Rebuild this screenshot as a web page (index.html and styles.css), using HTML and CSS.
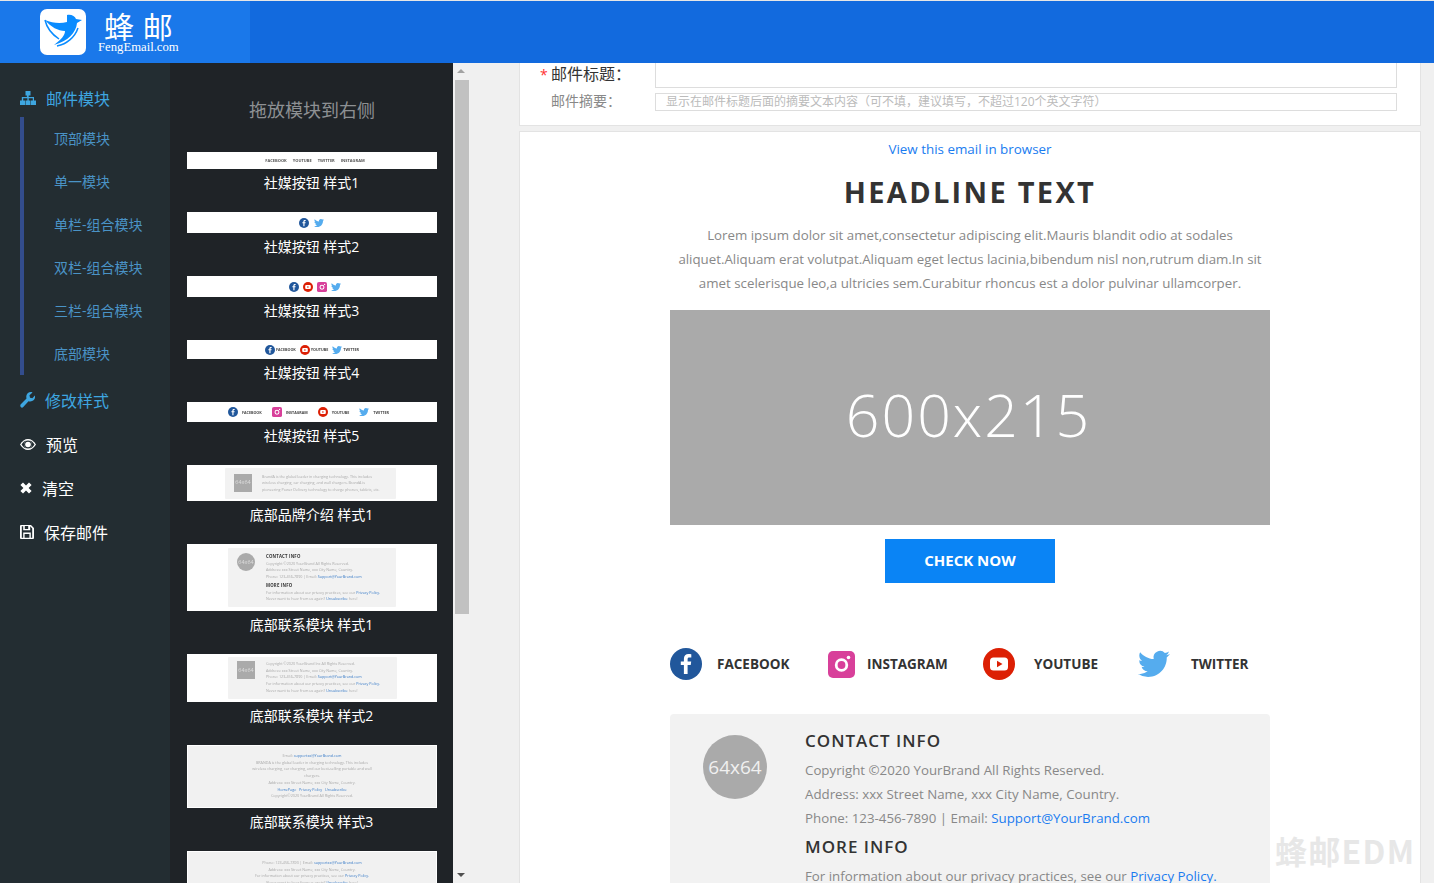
FILE: index.html
```html
<!DOCTYPE html>
<html lang="zh-CN">
<head>
<meta charset="utf-8">
<title>蜂邮EDM</title>
<link rel="stylesheet" href="styles.css">
</head>
<body>
<svg class="sprite" width="0" height="0" aria-hidden="true">
  <symbol id="i-fb" viewBox="0 0 32 32"><circle cx="16" cy="16" r="16" fill="#21579b"/><path d="M17.6 26v-9h3.1l.5-3.600h-3.600v-2.200c0-1 .4-1.700 1.800-1.700h1.900V6.300c-.4 0-1.500-.2-2.800-.2-2.800 0-4.600 1.700-4.600 4.700v2.600h-3.100V17h3.100v9z" fill="#fff"/></symbol>
  <symbol id="i-ig" viewBox="0 0 27 27"><rect width="27" height="27" rx="5" fill="#d8409a"/><circle cx="13.500" cy="14" r="5.300" fill="none" stroke="#fff" stroke-width="2.800"/><circle cx="20.500" cy="6.500" r="1.800" fill="#fff"/></symbol>
  <symbol id="i-yt" viewBox="0 0 32 32"><circle cx="16" cy="16" r="16" fill="#dc1f04"/><rect x="7" y="9.500" width="18" height="13" rx="3.500" fill="#fff"/><path d="M14 12.700v6.600l5.500-3.300z" fill="#dc1f04"/></symbol>
  <symbol id="i-tw" viewBox="0 0 24 24"><path d="M23.953 4.570a10 10 0 01-2.825.775 4.958 4.958 0 002.163-2.723c-.951.555-2.005.959-3.127 1.184a4.920 4.920 0 00-8.384 4.482C7.690 8.095 4.067 6.130 1.640 3.162a4.822 4.822 0 00-.666 2.475c0 1.710.870 3.213 2.188 4.096a4.904 4.904 0 01-2.228-.616v.060a4.923 4.923 0 003.946 4.827 4.996 4.996 0 01-2.212.085 4.936 4.936 0 004.604 3.417 9.867 9.867 0 01-6.102 2.105c-.390 0-.779-.023-1.170-.067a13.995 13.995 0 007.557 2.209c9.053 0 13.998-7.496 13.998-13.985 0-.210 0-.420-.015-.630A9.935 9.935 0 0024 4.590z" fill="#55acee"/></symbol>
</svg>

<header class="topbar">
  <div class="brand">
    <svg class="logo" viewBox="0 0 46 46" width="46" height="46">
      <rect width="46" height="46" rx="7" fill="#fff"/>
      <path d="M27 6C31 5 35 7 36 10L42 11 37 14C36 24 28 32 14 36 22 30 25 26 25 22 18 22 11 18 5 11 12 14 20 15 27 13Z" fill="#0a8cff"/>
      <path d="M38 19C35 28 27 35 17 37" fill="none" stroke="#0a8cff" stroke-width="1.500"/>
      <path d="M5 11C7 20 13 26 19 30" fill="none" stroke="#0a8cff" stroke-width="1.500"/>
    </svg>
    <div class="brand-text">
      <div class="brand-cn">蜂 邮</div>
      <div class="brand-en">FengEmail.com</div>
    </div>
  </div>
</header>

<div class="workspace">
  <nav class="sidenav">
    <div class="nav-item nav-active">
      <svg class="ni" width="16" height="14" viewBox="0 0 16 14"><path d="M5.500 0h5v4.500H8.700V6H14v3.500h2V14h-5V9.500h1.800V7.300H8.700v2.200h1.800V14h-5V9.500h1.900V7.300H3.200v2.200H5V14H0V9.500h1.800V6h5.100V4.500H5.500z" fill="#3ea6e0"/></svg>
      <span>邮件模块</span>
    </div>
    <ul class="subnav">
      <li>顶部模块</li>
      <li>单一模块</li>
      <li>单栏-组合模块</li>
      <li>双栏-组合模块</li>
      <li>三栏-组合模块</li>
      <li>底部模块</li>
    </ul>
    <div class="nav-item nav-blue nav-first">
      <svg class="ni" width="15" height="16" viewBox="0 0 15 16"><path d="M1 15.300c-1-1-1-2.300 0-3.300l5.500-5.500C5.900 4.300 6.500 2.300 8 1 9.300 0 11 -.2 12.500.4L9.500 3.300l.5 2.400 2.400.6 2.400-2.800c.6 1.600.2 3.300-1 4.600-1.300 1.300-3.300 1.800-5.300 1.200L3.500 14.800c-.8.900-1.700 1.200-2.500.5z" fill="#3ea6e0"/></svg>
      <span>修改样式</span>
    </div>
    <div class="nav-item">
      <svg class="ni" width="16" height="11" viewBox="0 0 16 11"><path d="M0 5.500C2 2 5 0 8 0s6 2 8 5.500C14 9 11 11 8 11S2 9 0 5.500z" fill="#fff"/><circle cx="8" cy="5.500" r="3.900" fill="#222d32"/><circle cx="8" cy="5.500" r="2.800" fill="#fff"/><path d="M1.500 5.500C3 3.300 4.500 2 6 1.500 4.700 2.500 4.200 3.800 4.200 5.500S4.700 8.500 6 9.500C4.500 9 3 7.700 1.500 5.500z" fill="#222d32"/><path d="M14.500 5.500C13 3.300 11.500 2 10 1.500c1.300 1 1.800 2.300 1.800 4s-.5 3-1.800 4c1.500-.5 3-1.800 4.500-4z" fill="#222d32"/></svg>
      <span>预览</span>
    </div>
    <div class="nav-item">
      <svg class="ni" width="12" height="12" viewBox="0 0 12 12"><path d="M3 .4L6 3.400 9 .4 11.600 3 8.600 6l3 3L9 11.600l-3-3-3 3L.4 9l3-3-3-3z" fill="#fff"/></svg>
      <span>清空</span>
    </div>
    <div class="nav-item">
      <svg class="ni" width="14" height="14" viewBox="0 0 14 14"><path fill-rule="evenodd" d="M1 0h10l3 3v10a1 1 0 01-1 1H1a1 1 0 01-1-1V1a1 1 0 011-1zm.8 1.200v11.600h1.400V7.500h7.600v5.300h1.400V3.600l-2-2.400v4H3.200v-4zm3-.1v2.900h3.400V1.100zm-.2 7.800v3.900h4.800V8.900z" fill="#fff"/></svg>
      <span>保存邮件</span>
    </div>
  </nav>

  <aside class="blocks">
    <h2 class="blocks-title">拖放模块到右侧</h2>

    <div class="block">
      <div class="thumb t1 soc-row"><b>FACEBOOK</b><b>YOUTUBE</b><b>TWITTER</b><b>INSTAGRAM</b></div>
      <p class="block-name">社媒按钮 样式1</p>
    </div>
    <div class="block">
      <div class="thumb t2 soc-icons gap5 shift-l">
        <svg class="si"><use href="#i-fb"/></svg><svg class="si"><use href="#i-tw"/></svg>
      </div>
      <p class="block-name">社媒按钮 样式2</p>
    </div>
    <div class="block">
      <div class="thumb t2 soc-icons gap4 shift-r">
        <svg class="si"><use href="#i-fb"/></svg><svg class="si"><use href="#i-yt"/></svg><svg class="si"><use href="#i-ig"/></svg><svg class="si"><use href="#i-tw"/></svg>
      </div>
      <p class="block-name">社媒按钮 样式3</p>
    </div>
    <div class="block">
      <div class="thumb t4 soc-labels gap4">
        <span><svg class="si"><use href="#i-fb"/></svg><b>FACEBOOK</b></span>
        <span><svg class="si"><use href="#i-yt"/></svg><b>YOUTUBE</b></span>
        <span><svg class="si"><use href="#i-tw"/></svg><b>TWITTER</b></span>
      </div>
      <p class="block-name">社媒按钮 样式4</p>
    </div>
    <div class="block">
      <div class="thumb t5 soc-labels gap10 shift-l2">
        <span class="wide"><svg class="si"><use href="#i-fb"/></svg><b>FACEBOOK</b></span>
        <span class="wide"><svg class="si"><use href="#i-ig"/></svg><b>INSTAGRAM</b></span>
        <span class="wide"><svg class="si"><use href="#i-yt"/></svg><b>YOUTUBE</b></span>
        <span class="wide"><svg class="si"><use href="#i-tw"/></svg><b>TWITTER</b></span>
      </div>
      <p class="block-name">社媒按钮 样式5</p>
    </div>
    <div class="block">
      <div class="thumb t6">
        <div class="mini mini-brand">
          <div class="mini-square">64x64</div>
          <div class="mini-copy">BrandA is the global leader in charging technology. This includes<br>wireless charging, car charging, and wall chargers. BrandA is<br>pioneering Power Delivery technology to charge phones, tablets, etc.</div>
        </div>
      </div>
      <p class="block-name">底部品牌介绍 样式1</p>
    </div>
    <div class="block">
      <div class="thumb t7">
        <div class="mini mini-contact">
          <div class="mini-circle">64x64</div>
          <div class="mini-copy">
            <strong>CONTACT INFO</strong>
            Copyright ©2020 YourBrand All Rights Reserved.<br>
            Address: xxx Street Name, xxx City Name, Country.<br>
            Phone: 123-456-7890 | Email: <a>Support@YourBrand.com</a><br>
            <strong>MORE INFO</strong>
            For information about our privacy practices, see our <a>Privacy Policy.</a><br>
            Never want to hear from us again? <a>Unsubscribe</a> here!
          </div>
        </div>
      </div>
      <p class="block-name">底部联系模块 样式1</p>
    </div>
    <div class="block">
      <div class="thumb t8">
        <div class="mini mini-contact2">
          <div class="mini-square">64x64</div>
          <div class="mini-copy">
            Copyright ©2020 YourBrand Inc All Rights Reserved.<br>
            Address: xxx Street Name, xxx City Name, Country.<br>
            Phone: 123-456-7890 | Email: <a>Support@YourBrand.com</a><br>
            For information about our privacy practices, see our <a>Privacy Policy.</a><br>
            Never want to hear from us again? <a>Unsubscribe</a> here!
          </div>
        </div>
      </div>
      <p class="block-name">底部联系模块 样式2</p>
    </div>
    <div class="block">
      <div class="thumb t9">
        <div class="mini-center">
          Email: <a>supportxx@YourBrand.com</a><br>
          BRANDA is the global leader in charging technology. This includes<br>
          wireless charging, car charging, and our best-selling portable and wall<br>
          chargers.<br>
          Address: xxx Street Name, xxx City Name, Country.<br>
          <a>HomePage</a> &nbsp; <a>Privacy Policy</a> &nbsp; <a>Unsubscribe</a><br>
          Copyright©2020 YourBrand All Rights Reserved.
        </div>
      </div>
      <p class="block-name">底部联系模块 样式3</p>
    </div>
    <div class="block">
      <div class="thumb t10">
        <div class="mini-center">
          Phone: 123-456-7890 | Email: <a>supportxx@YourBrand.com</a><br>
          Address: xxx Street Name, xxx City Name, Country.<br>
          For information about our privacy practices, see our <a>Privacy Policy.</a><br>
          Never want to hear from us again? <a>Unsubscribe</a> here!
        </div>
      </div>
    </div>
  </aside>

  <div class="scrollbar">
    <div class="arrow arrow-up"></div>
    <div class="scroll-thumb"></div>
    <div class="arrow arrow-down"></div>
  </div>

  <main class="editor">
    <section class="form-card">
      <label class="f-label f-main"><i>*</i>邮件标题：</label>
      <div class="f-input f-title"></div>
      <label class="f-label f-sub">邮件摘要：</label>
      <div class="f-input f-summary">显示在邮件标题后面的摘要文本内容（可不填，建议填写，不超过120个英文字符）</div>
    </section>

    <section class="mail-card">
      <div class="mail">
        <a class="view-link">View this email in browser</a>
        <h1 class="headline">HEADLINE TEXT</h1>
        <p class="lorem">Lorem ipsum dolor sit amet,consectetur adipiscing elit.Mauris blandit odio at sodales aliquet.Aliquam erat volutpat.Aliquam eget lectus lacinia,bibendum nisl non,rutrum diam.In sit amet scelerisque leo,a ultricies sem.Curabitur rhoncus est a dolor pulvinar ullamcorper.</p>
        <div class="hero">600x215</div>
        <a class="cta">CHECK NOW</a>
        <div class="social">
          <span class="soc soc-fb"><svg width="32" height="32"><use href="#i-fb"/></svg><b>FACEBOOK</b></span>
          <span class="soc soc-ig"><svg width="27" height="27"><use href="#i-ig"/></svg><b>INSTAGRAM</b></span>
          <span class="soc soc-yt"><svg width="32" height="32"><use href="#i-yt"/></svg><b>YOUTUBE</b></span>
          <span class="soc soc-tw"><svg width="32" height="32"><use href="#i-tw"/></svg><b>TWITTER</b></span>
        </div>
        <div class="contact">
          <div class="avatar">64x64</div>
          <div class="contact-body">
            <h3>CONTACT INFO</h3>
            <p>Copyright ©2020 YourBrand All Rights Reserved.</p>
            <p>Address: xxx Street Name, xxx City Name, Country.</p>
            <p>Phone: 123-456-7890 | Email: <a>Support@YourBrand.com</a></p>
            <h3>MORE INFO</h3>
            <p>For information about our privacy practices, see our <a>Privacy Policy.</a></p>
            <p>Never want to hear from us again? <a>Unsubscribe</a> here!</p>
          </div>
        </div>
      </div>
    </section>
  </main>
</div>

<div class="watermark">蜂邮EDM</div>
</body>
</html>
```

FILE: styles.css
```css
* { box-sizing: border-box; }
html, body { height: 100%; }
body {
  margin: 0;
  overflow: hidden;
  display: flex;
  flex-direction: column;
  font-family: "Open Sans", "Noto Sans CJK SC", sans-serif;
  background: #f0f0f0;
}
.sprite { position: absolute; }
a { color: #1a7cf0; }

/* header */
.topbar {
  height: 63px;
  flex: none;
  background: #126ade;
  border-top: 1px solid #e6e6e6;
}
.brand {
  width: 250px;
  height: 62px;
  background: #1a78ea;
  display: flex;
  align-items: center;
  padding-left: 40px;
}
.logo { display: block; }
.brand-text { margin-left: 12px; color: #fff; }
.brand-cn {
  font: 30px/30px "Noto Sans CJK SC", sans-serif;
  padding-left: 6px;
  letter-spacing: 1px;
  white-space: pre;
}
.brand-en { margin-top: 1px; font: 12.700px/13px "Liberation Serif", serif; }

/* layout */
.workspace { flex: 1; display: flex; min-height: 0; }

/* side navigation */
.sidenav {
  width: 170px;
  flex: none;
  background: #232d32;
  padding: 15px 0 0 20px;
  color: #fff;
}
.nav-item {
  height: 44px;
  display: flex;
  align-items: center;
  gap: 10px;
  font-size: 16px;
}
.nav-active { height: 39px; color: #3ea6e0; }
.nav-blue { color: #3ea6e0; }
.nav-first { margin-top: 3px; }
.ni { flex: none; }
.subnav {
  list-style: none;
  margin: 0;
  padding: 0 0 0 30px;
  border-left: 4px solid #334d8d;
}
.subnav li {
  height: 43px;
  line-height: 43px;
  font-size: 14px;
  color: #4a93c6;
}

/* block panel */
.blocks {
  width: 283px;
  flex: none;
  background: #1f2327;
  padding: 0 16px 0 17px;
  overflow: hidden;
}
.blocks-title {
  margin: 0;
  height: 89px;
  padding-top: 31px;
  line-height: 32px;
  text-align: center;
  font-size: 18px;
  font-weight: 400;
  color: #8d9093;
}
.block { margin-bottom: 15px; }
.block-name {
  margin: 0;
  height: 28px;
  line-height: 28px;
  padding-right: 1px;
  text-align: center;
  font-size: 14px;
  color: #fff;
}
.thumb {
  width: 250px;
  background: #fff;
  display: flex;
  align-items: center;
  justify-content: center;
  overflow: hidden;
  font-size: 3.700px;
  color: #aaa;
}
.thumb > * { filter: blur(.25px); }
.thumb a { color: #3a7cc8; }
.t1 { height: 17px; }
.t2 { height: 21px; }
.t4 { height: 19px; }
.t5 { height: 20px; }
.t6 { height: 36px; }
.t7 { height: 67px; }
.t8 { height: 48px; }
.t9 { height: 63px; background: #f1f1f1; border: 1px solid #fff; }
.t10 { height: 60px; background: #f1f1f1; border: 1px solid #fff; align-items: flex-start; padding-top: 8px; }

.soc-row { gap: 6px; font-size: 4px; color: #555; padding-left: 6px; }
.soc-icons, .soc-labels { display: flex; align-items: center; }
.gap5 { gap: 5px; }
.gap4 { gap: 4px; }
.gap10 { gap: 10px; }
.shift-l { padding-right: 2px; }
.shift-r { padding-left: 5px; }
.shift-l2 { padding-right: 7px; }
.si { width: 10px; height: 10px; display: block; flex: none; }
.soc-labels span { display: flex; align-items: center; gap: 1px; }
.soc-labels span.wide { gap: 4px; }
.soc-labels b { font-size: 3.700px; color: #444; }

.mini {
  background: #f2f2f2;
  border-radius: 1px;
  display: flex;
  width: 168px;
  white-space: nowrap;
  line-height: 6.700px;
}
.mini-brand { height: 31px; width: 171px; margin-right: 3px; padding: 6px 0 0 9px; gap: 10px; }
.mini-contact { height: 59px; padding: 4px 0 0 9px; gap: 11px; }
.mini-contact2 { height: 42px; width: 169px; margin-right: -1px; padding: 4px 0 0 9px; gap: 11px; }
.mini-square {
  width: 18px; height: 18px;
  background: #aaa;
  color: #ddd;
  font-size: 5.500px;
  display: flex; align-items: center; justify-content: center;
  flex: none;
}
.mini-circle {
  width: 18px; height: 18px;
  margin-top: 1px;
  border-radius: 50%;
  background: #aaa;
  color: #ddd;
  font-size: 5.500px;
  display: flex; align-items: center; justify-content: center;
  flex: none;
}
.mini-copy strong { display: block; margin: 1px 0; color: #333; font-size: 4.300px; letter-spacing: .2px; }
.mini-center { text-align: center; line-height: 6.700px; white-space: nowrap; }

/* scrollbar */
.scrollbar {
  width: 17px;
  flex: none;
  background: #f1f1f1;
  display: flex;
  flex-direction: column;
  align-items: flex-start;
}
.scroll-thumb {
  width: 14px;
  height: 534px;
  margin-left: 2px;
  background: #c1c1c1;
}
.arrow { width: 0; height: 0; border: 4px solid transparent; margin-left: 4px; }
.arrow-up { border-bottom: 4px solid #a3a3a3; border-top-width: 0; margin-top: 6px; margin-bottom: 7px; }
.arrow-down { border-top: 4px solid #505050; border-bottom-width: 0; margin-top: auto; margin-bottom: 6px; }

/* editor */
.editor {
  flex: 1;
  min-width: 0;
  padding: 0 13px 0 49px;
  overflow: hidden;
}
.form-card {
  background: #fff;
  border: 1px solid #e3e3e3;
  border-top: 0;
  height: 63px;
  display: grid;
  grid-template-columns: 135px 742px;
  grid-template-rows: 25px 18px;
  row-gap: 5px;
}
.f-label { position: relative; padding-left: 31px; }
.f-main { color: #333; font-size: 16px; line-height: 23px; }
.f-sub { color: #888; font-size: 14px; line-height: 16px; }
.f-main i { position: absolute; left: 20px; color: #f33; font-style: normal; font-size: 14px; }
.f-input { border: 1px solid #ddd; background: #fff; }
.f-title { border-top: 0; }
.f-summary {
  padding-left: 10px;
  font-size: 12px;
  line-height: 16px;
  color: #bbb;
  white-space: nowrap;
  overflow: hidden;
}
.mail-card {
  margin-top: 5px;
  background: #fff;
  border: 1px solid #e3e3e3;
  height: 760px;
}
.mail { width: 600px; margin: 0 auto; text-align: center; }
.view-link { display: block; font-size: 13.400px; line-height: 34px; color: #1a7cf0; }
.headline {
  margin: 6px 0 0;
  font-size: 29px;
  line-height: 40px;
  font-weight: 700;
  letter-spacing: 2.300px;
  color: #333;
}
.lorem {
  margin: 11px 0 0;
  font-size: 13.300px;
  line-height: 24px;
  color: #888;
}
.hero {
  margin-top: 15px;
  height: 215px;
  padding-bottom: 7px;
  padding-right: 3px;
  background: #aaa;
  color: #fff;
  font-size: 59px;
  font-weight: 300;
  letter-spacing: 2px;
  display: flex; align-items: center; justify-content: center;
}
.cta {
  display: block;
  width: 170px;
  height: 44px;
  margin: 14px auto 0;
  background: #0a84f5;
  color: #fff;
  font-size: 15px;
  font-weight: 700;
  line-height: 43px;
}
.social {
  margin-top: 65px;
  height: 32px;
  display: flex;
  align-items: center;
}
.soc { display: flex; align-items: center; font-size: 13.500px; color: #333; }
.soc b { display: block; white-space: nowrap; }
.soc-fb { width: 158px; gap: 15px; }
.soc-ig { width: 155px; gap: 12px; }
.soc-yt { width: 155px; gap: 19px; }
.soc-tw { gap: 21px; }
.contact {
  margin-top: 34px;
  background: #f2f2f2;
  border-radius: 4px;
  display: flex;
  text-align: left;
  padding: 14px 0 0 33px;
  gap: 38px;
  height: 300px;
}
.avatar {
  width: 64px; height: 64px;
  margin-top: 7px;
  border-radius: 50%;
  background: #aaa;
  color: #f0f0f0;
  font-size: 19px;
  display: flex; align-items: center; justify-content: center;
  flex: none;
}
.contact-body h3 {
  margin: 0 0 4px;
  font-size: 17px;
  line-height: 26px;
  letter-spacing: 1px;
  font-weight: 600;
  color: #333;
}
.contact-body p + h3 { margin-top: 4px; }
.contact-body p { margin: 0; font-size: 13.300px; line-height: 24px; color: #888; white-space: nowrap; }
.contact-body a { color: #1a7cf0; }

/* watermark */
.watermark {
  position: absolute;
  left: 1275px;
  top: 829px;
  font: 700 32px/42px "Noto Sans CJK SC", sans-serif;
  letter-spacing: 1.300px;
  color: #e7e7e7;
}
```
